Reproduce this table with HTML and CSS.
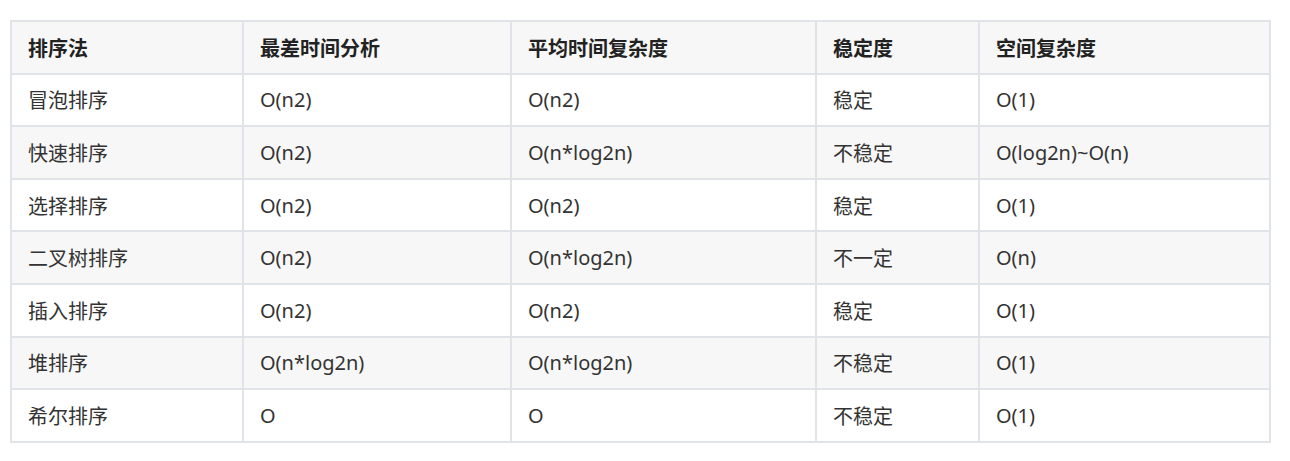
FILE: index.html
```html
<!DOCTYPE html>
<html lang="zh">
<head>
<meta charset="utf-8">
<link rel="stylesheet" href="styles.css">
</head>
<body>
<table class="sort-table">
  <colgroup>
    <col class="c1"><col class="c2"><col class="c3"><col class="c4"><col class="c5">
  </colgroup>
  <thead>
    <tr><th>排序法</th><th>最差时间分析</th><th>平均时间复杂度</th><th>稳定度</th><th>空间复杂度</th></tr>
  </thead>
  <tbody>
    <tr><td>冒泡排序</td><td>O(n2)</td><td>O(n2)</td><td>稳定</td><td>O(1)</td></tr>
    <tr><td>快速排序</td><td>O(n2)</td><td>O(n*log2n)</td><td>不稳定</td><td>O(log2n)~O(n)</td></tr>
    <tr><td>选择排序</td><td>O(n2)</td><td>O(n2)</td><td>稳定</td><td>O(1)</td></tr>
    <tr><td>二叉树排序</td><td>O(n2)</td><td>O(n*log2n)</td><td>不一定</td><td>O(n)</td></tr>
    <tr><td>插入排序</td><td>O(n2)</td><td>O(n2)</td><td>稳定</td><td>O(1)</td></tr>
    <tr><td>堆排序</td><td>O(n*log2n)</td><td>O(n*log2n)</td><td>不稳定</td><td>O(1)</td></tr>
    <tr><td>希尔排序</td><td>O</td><td>O</td><td>不稳定</td><td>O(1)</td></tr>
  </tbody>
</table>
</body>
</html>
```

FILE: styles.css
```css
html, body {
  margin: 0;
  padding: 0;
  background: #ffffff;
}
body {
  padding: 20px 0 0 10px;
  font-family: "Noto Sans", "Noto Sans CJK SC", sans-serif;
  font-size: 20px;
  color: #333333;
}
.sort-table {
  border-collapse: collapse;
  table-layout: fixed;
  width: 1259px;
}
.c1 { width: 232px; }
.c2 { width: 268px; }
.c3 { width: 305px; }
.c4 { width: 163px; }
.c5 { width: 291px; }
.sort-table th,
.sort-table td {
  border: 2px solid #e0e3e7;
  height: 52.6px;
  padding: 0 16px;
  text-align: left;
  vertical-align: middle;
  box-sizing: border-box;
  white-space: nowrap;
}
.sort-table th {
  font-weight: 700;
  color: #222222;
}
.sort-table thead tr {
  background: #f7f7f7;
}
.sort-table tbody tr:nth-child(2n) {
  background: #f7f7f7;
}
```
